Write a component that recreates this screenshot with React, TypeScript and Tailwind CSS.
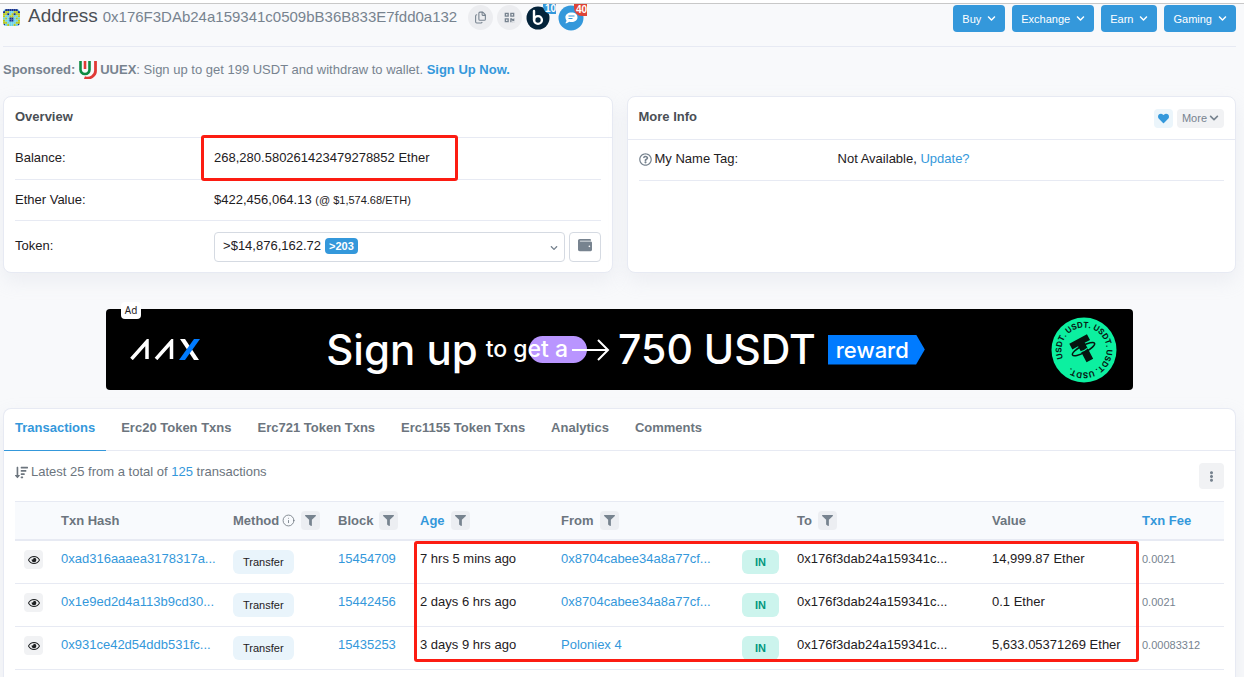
import { Files, Info } from 'lucide-react';
import {
  FaChevronDown,
  FaEllipsisV,
  FaFilter,
  FaHeart,
  FaQrcode,
  FaRegEye,
  FaRegQuestionCircle,
  FaSortAmountDown,
  FaWallet,
} from 'react-icons/fa';

const navButtons = ['Buy', 'Exchange', 'Earn', 'Gaming'];

const tabs = [
  'Transactions',
  'Erc20 Token Txns',
  'Erc721 Token Txns',
  'Erc1155 Token Txns',
  'Analytics',
  'Comments',
];

const transactions = [
  { hash: '0xad316aaaea3178317a...', block: '15454709', age: '7 hrs 5 mins ago', from: '0x8704cabee34a8a77cf...', to: '0x176f3dab24a159341c...', value: '14,999.87 Ether', fee: '0.0021' },
  { hash: '0x1e9ed2d4a113b9cd30...', block: '15442456', age: '2 days 6 hrs ago', from: '0x8704cabee34a8a77cf...', to: '0x176f3dab24a159341c...', value: '0.1 Ether', fee: '0.0021' },
  { hash: '0x931ce42d54ddb531fc...', block: '15435253', age: '3 days 9 hrs ago', from: 'Poloniex 4', to: '0x176f3dab24a159341c...', value: '5,633.05371269 Ether', fee: '0.00083312' },
];

// 8x8 identicon: n = navy, c = cyan, y = olive
const blockie = [
  'cnnnnnnc',
  'nyyccyyn',
  'yyncynyy',
  'yccyyccy',
  'cycnncyc',
  'yccnnccy',
  'yyccccyy',
  'ncyccycn',
];
const blockieColors: Record<string, string> = { n: '#14308c', c: '#66d3ea', y: '#b7c81c' };

const Blockie = () => (
  <svg viewBox="0 0 8 8" className="h-[17px] w-[17px] rounded" aria-hidden="true">
    {blockie.map((row, y) =>
      row.split('').map((cell, x) => (
        <rect key={`${x}-${y}`} x={x} y={y} width="1" height="1" fill={blockieColors[cell]} />
      ))
    )}
  </svg>
);

const UuexLogo = () => (
  <svg viewBox="0 0 18 18" className="h-[18px] w-[18px]" aria-hidden="true">
    <path d="M1.500 0V8a4.500 4.500 0 0 0 4.500 5a4.500 4.500 0 0 0 4.500-5V0" fill="none" stroke="#0f8a43" strokeWidth="2.600" />
    <path d="M6 0V8" stroke="#e03a36" strokeWidth="2.600" />
    <path d="M16.500 0V9a8 7.500 0 0 1-11 7.500" fill="none" stroke="#e03a36" strokeWidth="2.800" />
  </svg>
);

const AaxLogo = () => (
  <svg viewBox="0 0 70 21" className="h-[21px] w-[70px]" role="img" aria-label="AAX">
    <path d="M1.500 20 17 2.500V20M26 20 41.500 2.500V20" fill="none" stroke="#fff" strokeWidth="3.500" />
    <path d="M50 0h5l14 21h-5z" fill="#fff" />
    <path d="M64 0h6L55 21h-6z" fill="#007bff" />
  </svg>
);

const UsdtCoin = () => (
  <svg viewBox="0 0 66 66" className="h-[66px] w-[66px]" role="img" aria-label="USDT">
    <circle cx="33" cy="33" r="32.500" fill="#0cf0a0" />
    <defs>
      <path id="coin-ring" d="M33 33m-22.500 0a22.500 22.500 0 1 1 45 0a22.500 22.500 0 1 1-45 0" />
    </defs>
    <g transform="rotate(-22 33 33)">
      <text fontSize="8" fontWeight="700" className="font-[Inter,sans-serif]" fill="#071a14">
        <textPath href="#coin-ring">USDT. USDT. USDT. USDT. USDT.</textPath>
      </text>
    </g>
    <g transform="rotate(-28 33 33)">
      <path d="M23 20.500h20v6.500H37V45h-7.500V27H23z" fill="#06140f" />
      <ellipse cx="33" cy="32" rx="12.500" ry="3.500" fill="none" stroke="#06140f" strokeWidth="1.500" />
      <path d="M29 33q4 1 8 0" fill="none" stroke="#0cf0a0" strokeWidth="1.200" />
    </g>
  </svg>
);

const FilterButton = ({ label }: { label: string }) => (
  <button aria-label={label} className="flex h-[19px] w-[19px] items-center justify-center rounded bg-[#eceef2] text-[#77838f]">
    <FaFilter size={11} />
  </button>
);

const Header = () => (
  <header className="flex h-[43px] items-start justify-between border-b border-[#e7eaf3]">
    <div className="flex h-[27px] items-center">
      <Blockie />
      <h1 className="ml-2 flex items-baseline gap-[5px] pb-0.5 text-[19px] leading-6 text-[#4a4f55]">
        Address
        <span className="text-[15px] text-[#77838f]">0x176F3DAb24a159341c0509bB36B833E7fdd0a132</span>
      </h1>
      <div className="ml-[11px] flex items-center gap-1">
        <button aria-label="Copy address" className="flex h-[25px] w-[25px] items-center justify-center rounded-full bg-[#ecedf0] text-[#77838f]">
          <Files size={13} />
        </button>
        <button aria-label="View QR code" className="flex h-[25px] w-[25px] items-center justify-center rounded-full bg-[#ecedf0] text-[#77838f]">
          <FaQrcode size={11} />
        </button>
      </div>
      <a href="#blockscan" aria-label="Blockscan" className="relative ml-1 flex h-[27px] w-[30px] items-center">
        <svg viewBox="0 0 24 24" className="h-6 w-6" aria-hidden="true">
          <circle cx="12" cy="12" r="11.500" fill="#04233a" />
          <path d="M8 5v9" stroke="#fff" strokeWidth="2.400" strokeLinecap="round" />
          <circle cx="12" cy="14" r="3.900" fill="none" stroke="#fff" strokeWidth="2.400" />
        </svg>
        <span className="absolute top-0 right-0 rounded-bl-lg bg-[#3498db] pl-0.5 text-[10px] leading-[10px] font-bold text-white">10</span>
      </a>
      <a href="#chat" aria-label="Chat" className="relative ml-0.5 flex h-[27px] w-[29px] items-center">
        <svg viewBox="0 0 26 26" className="h-[26px] w-[26px]" aria-hidden="true">
          <circle cx="13" cy="13" r="12.500" fill="#3498db" />
          <path d="M13.500 7.500c3.600 0 6 2 6 4.700s-2.500 4.900-6 4.900c-.8 0-1.600-.1-2.300-.4-.9.900-2.200 1.500-3.900 1.500.8-.8 1.200-1.700 1.200-2.600-.7-.9-1.100-2-1.100-3.300 0-2.700 2.500-4.800 6.100-4.800z" fill="#fff" />
          <path d="M10.500 11h6M10.500 13.500h4" stroke="#3498db" strokeWidth="1.200" />
        </svg>
        <span className="absolute top-0 right-0 rounded-bl-lg bg-[#de4437] pl-0.5 text-[10px] leading-3 font-bold text-white">40</span>
      </a>
    </div>
    <nav className="flex gap-[7px] pt-px">
      {navButtons.map((name) => (
        <button key={name} className="flex h-[27px] items-center gap-1.5 rounded bg-[#3498db] px-[9px] text-[11px] text-white">
          {name}
          <FaChevronDown size={9} />
        </button>
      ))}
    </nav>
  </header>
);

const Overview = () => (
  <section className="rounded-lg border border-[#e7eaf3] bg-white shadow-[0_8px_19px_rgba(189,197,209,0.2)]">
    <h2 className="flex h-[41px] items-center border-b border-[#e7eaf3] px-[11px] font-bold text-[#4a4f55]">Overview</h2>
    <div className="px-[11px] pb-[10px]">
      <div className="flex h-[42px] items-center border-b border-[#e7eaf3] pb-0.5">
        <div className="w-[34%]">Balance:</div>
        <div className="relative">
          268,280.580261423479278852 Ether
          {/* highlight */}
          <div className="pointer-events-none absolute -top-[14px] -right-7 -bottom-[14px] -left-[13px] rounded-[3px] border-3 border-[#fc1c12]" />
        </div>
      </div>
      <div className="flex h-[41px] items-center border-b border-[#e7eaf3]">
        <div className="w-[34%]">Ether Value:</div>
        <div>
          $422,456,064.13 <span className="text-[11px]">(@ $1,574.68/ETH)</span>
        </div>
      </div>
      <div className="flex items-start pt-[11px]">
        <label htmlFor="token" className="w-[34%] leading-7">Token:</label>
        <div className="relative flex-1">
          <select id="token" className="h-[30px] w-full appearance-none rounded border border-[#d5dae2] bg-white px-2 pb-0.5">
            <option>&gt;$14,876,162.72</option>
          </select>
          <span className="pointer-events-none absolute top-[6px] left-[111px] h-4 rounded bg-[#3498db] px-1 text-[11px] font-bold leading-4 text-white">&gt;203</span>
          <FaChevronDown size={8} className="pointer-events-none absolute top-3 right-[7px] text-[#77838f]" />
        </div>
        <button aria-label="Wallet" className="ml-1 flex h-[30px] w-8 items-center justify-center rounded border border-[#d5dae2] pb-1 text-[#77838f]">
          <FaWallet size={14} />
        </button>
      </div>
    </div>
  </section>
);

const MoreInfo = () => (
  <section className="rounded-lg border border-[#e7eaf3] bg-white shadow-[0_8px_19px_rgba(189,197,209,0.2)]">
    <div className="flex h-[43px] items-center justify-between border-b border-[#e7eaf3] px-[11px]">
      <h2 className="pb-0.5 font-bold text-[#4a4f55]">More Info</h2>
      <div className="flex gap-1">
        <button aria-label="Add to favorites" className="flex h-[19px] w-[19px] items-center justify-center rounded bg-[#ebf5fb] text-[#3498db]">
          <FaHeart size={11} />
        </button>
        <button className="flex h-[19px] items-center gap-0.5 rounded bg-[#f1f2f4] px-[5px] text-[11px] text-[#77838f]">
          More
          <FaChevronDown size={10} />
        </button>
      </div>
    </div>
    <div className="px-[11px]">
      <div className="flex h-[41px] items-center border-b border-[#e7eaf3] pb-0.5">
        <div className="flex w-[34%] items-center gap-[3px]">
          <FaRegQuestionCircle size={13} className="text-[#77838f]" />
          My Name Tag:
        </div>
        <div>
          Not Available, <a href="#update" className="text-[#3498db]">Update?</a>
        </div>
      </div>
    </div>
  </section>
);

const AdBanner = () => (
  <div className="relative mx-auto mt-9 w-5/6">
    <a href="#ad" className="flex h-[81px] items-center rounded-[4px] bg-black pr-4 pl-6 font-[Inter,sans-serif] font-medium text-white">
      <AaxLogo />
      <div className="mx-auto flex items-center">
        <span className="text-[42px] leading-none">Sign up</span>
        <span className="relative ml-2 flex items-center">
          <span className="absolute top-0 left-[43px] h-[27px] w-[58px] rounded-full bg-[#b995ff]" />
          <span className="relative text-[23px] leading-[27px]">to get a</span>
          <svg viewBox="0 0 38 24" className="relative ml-1 h-6 w-[38px]" aria-hidden="true">
            <path d="M0 12h36M26 2l10 10-10 10" fill="none" stroke="#fff" strokeWidth="2" />
          </svg>
        </span>
        <span className="ml-2 text-[41px] leading-none">750 USDT</span>
        <span className="ml-3 bg-[#007bff] pr-4 pl-2 text-[22px] leading-[30px] [clip-path:polygon(0_0,91%_0,100%_50%,91%_100%,0_100%)]">reward</span>
      </div>
      <UsdtCoin />
    </a>
    <span className="absolute -top-[7px] left-[15px] rounded bg-white px-1 font-['Noto_Sans',sans-serif] text-[10px] leading-[17px]">Ad</span>
  </div>
);

const Transactions = () => (
  <section className="mt-[18px] rounded-t-lg border border-b-0 border-[#e7eaf3] bg-white pb-5 shadow-[0_8px_19px_rgba(189,197,209,0.2)]">
    <nav className="flex border-b border-[#e7eaf3]">
      {tabs.map((tab, i) => (
        <a
          key={tab}
          href={`#tab-${i}`}
          className={i === 0
            ? '-mb-px mr-1 border-b border-[#3498db] px-[11px] pt-[10px] pb-[13px] font-bold text-[#3498db]'
            : 'mr-1 px-[11px] pt-[10px] pb-[13px] font-bold text-[#6c757e]'}
        >
          {tab}
        </a>
      ))}
    </nav>
    <div className="px-[11px]">
      <div className="flex h-[50px] items-start justify-between">
        <p className="flex items-center gap-[3px] pt-3 text-[#6c757e]">
          <FaSortAmountDown size={13} />
          <span>
            Latest 25 from a total of <a href="#all" className="text-[#3498db]">125</a> transactions
          </span>
        </p>
        <button aria-label="More options" className="mt-3 flex h-[26px] w-[25px] items-center justify-center rounded bg-[#f1f2f4] text-[#77838f]">
          <FaEllipsisV size={11} />
        </button>
      </div>

      <div className="relative">
        <table className="w-full table-fixed border-separate border-spacing-0 text-left whitespace-nowrap">
          <colgroup>
            <col className="w-[46px]" />
            <col className="w-[172px]" />
            <col className="w-[105px]" />
            <col className="w-[82px]" />
            <col className="w-[141px]" />
            <col className="w-[181px]" />
            <col className="w-[55px]" />
            <col className="w-[195px]" />
            <col className="w-[150px]" />
            <col className="w-[82px]" />
          </colgroup>
          <thead className="bg-[#f8fafd] text-[#6c757e] [&_th]:h-10 [&_th]:border-t [&_th]:border-b-2 [&_th]:border-[#e7eaf3]">
            <tr>
              <th />
              <th>Txn Hash</th>
              <th>
                <div className="flex items-center gap-1.5">
                  <span className="flex items-center gap-[3px]">Method <Info size={13} strokeWidth={1.5} /></span>
                  <FilterButton label="Filter by method" />
                </div>
              </th>
              <th>
                <div className="flex items-center gap-1.5">Block <FilterButton label="Filter by block" /></div>
              </th>
              <th>
                <div className="flex items-center gap-1.5">
                  <a href="#age" className="text-[#3498db]">Age</a>
                  <FilterButton label="Filter by age" />
                </div>
              </th>
              <th>
                <div className="flex items-center gap-1.5">From <FilterButton label="Filter by sender" /></div>
              </th>
              <th />
              <th>
                <div className="flex items-center gap-1.5">To <FilterButton label="Filter by recipient" /></div>
              </th>
              <th>Value</th>
              <th><a href="#fee" className="text-[#3498db]">Txn Fee</a></th>
            </tr>
          </thead>
          <tbody className="[&_td]:h-[43px] [&_td]:border-b [&_td]:border-[#e7eaf3] [&_td]:pt-[9px] [&_td]:align-top">
            {transactions.map((tx) => (
              <tr key={tx.hash}>
                <td>
                  <button aria-label="Preview transaction" className="ml-[9px] flex h-[19px] w-[19px] items-center justify-center rounded bg-[#f1f2f4]">
                    <FaRegEye size={12} />
                  </button>
                </td>
                <td><a href="#tx" className="text-[#3498db]">{tx.hash}</a></td>
                <td>
                  <span className="inline-block rounded-md bg-[#e9f4fb] px-[10px] text-[11px] leading-6">Transfer</span>
                </td>
                <td><a href="#block" className="text-[#3498db]">{tx.block}</a></td>
                <td>{tx.age}</td>
                <td><a href="#from" className="text-[#3498db]">{tx.from}</a></td>
                <td>
                  <span className="inline-block w-[37px] rounded-md bg-[#ccf4ed] text-center text-[11px] leading-6 font-bold text-[#02977e]">IN</span>
                </td>
                <td>{tx.to}</td>
                <td>{tx.value}</td>
                <td className="text-[11px] text-[#77838f]">{tx.fee}</td>
              </tr>
            ))}
          </tbody>
        </table>
        {/* highlight */}
        <div className="pointer-events-none absolute top-10 left-[33%] h-[121px] w-[60%] rounded-[3px] border-3 border-[#fc1c12]" />
      </div>
    </div>
  </section>
);

const App = () => {
  return (
    <div className="min-h-screen bg-[#f8f9fb] font-['Liberation_Sans',Arial,sans-serif] text-[13px] leading-[18px] text-[#1e2022]">
      <div className="h-1 border-b border-[#c8c8c8] bg-white" />
      <div className="pr-2 pl-[3px]">
        <Header />
        <p className="flex h-[49px] items-center pb-1 text-[#77838f]">
          <b>Sponsored:</b>
          <span className="mr-[3px] ml-1"><UuexLogo /></span>
          <span>
            <b>UUEX</b>: Sign up to get 199 USDT and withdraw to wallet.{' '}
            <a href="#sponsor" className="font-bold text-[#3498db]">Sign Up Now.</a>
          </span>
        </p>
        <main>
          <div className="grid grid-cols-2 gap-[14px]">
            <Overview />
            <MoreInfo />
          </div>
          <AdBanner />
          <Transactions />
        </main>
      </div>
    </div>
  );
};

export default App;
